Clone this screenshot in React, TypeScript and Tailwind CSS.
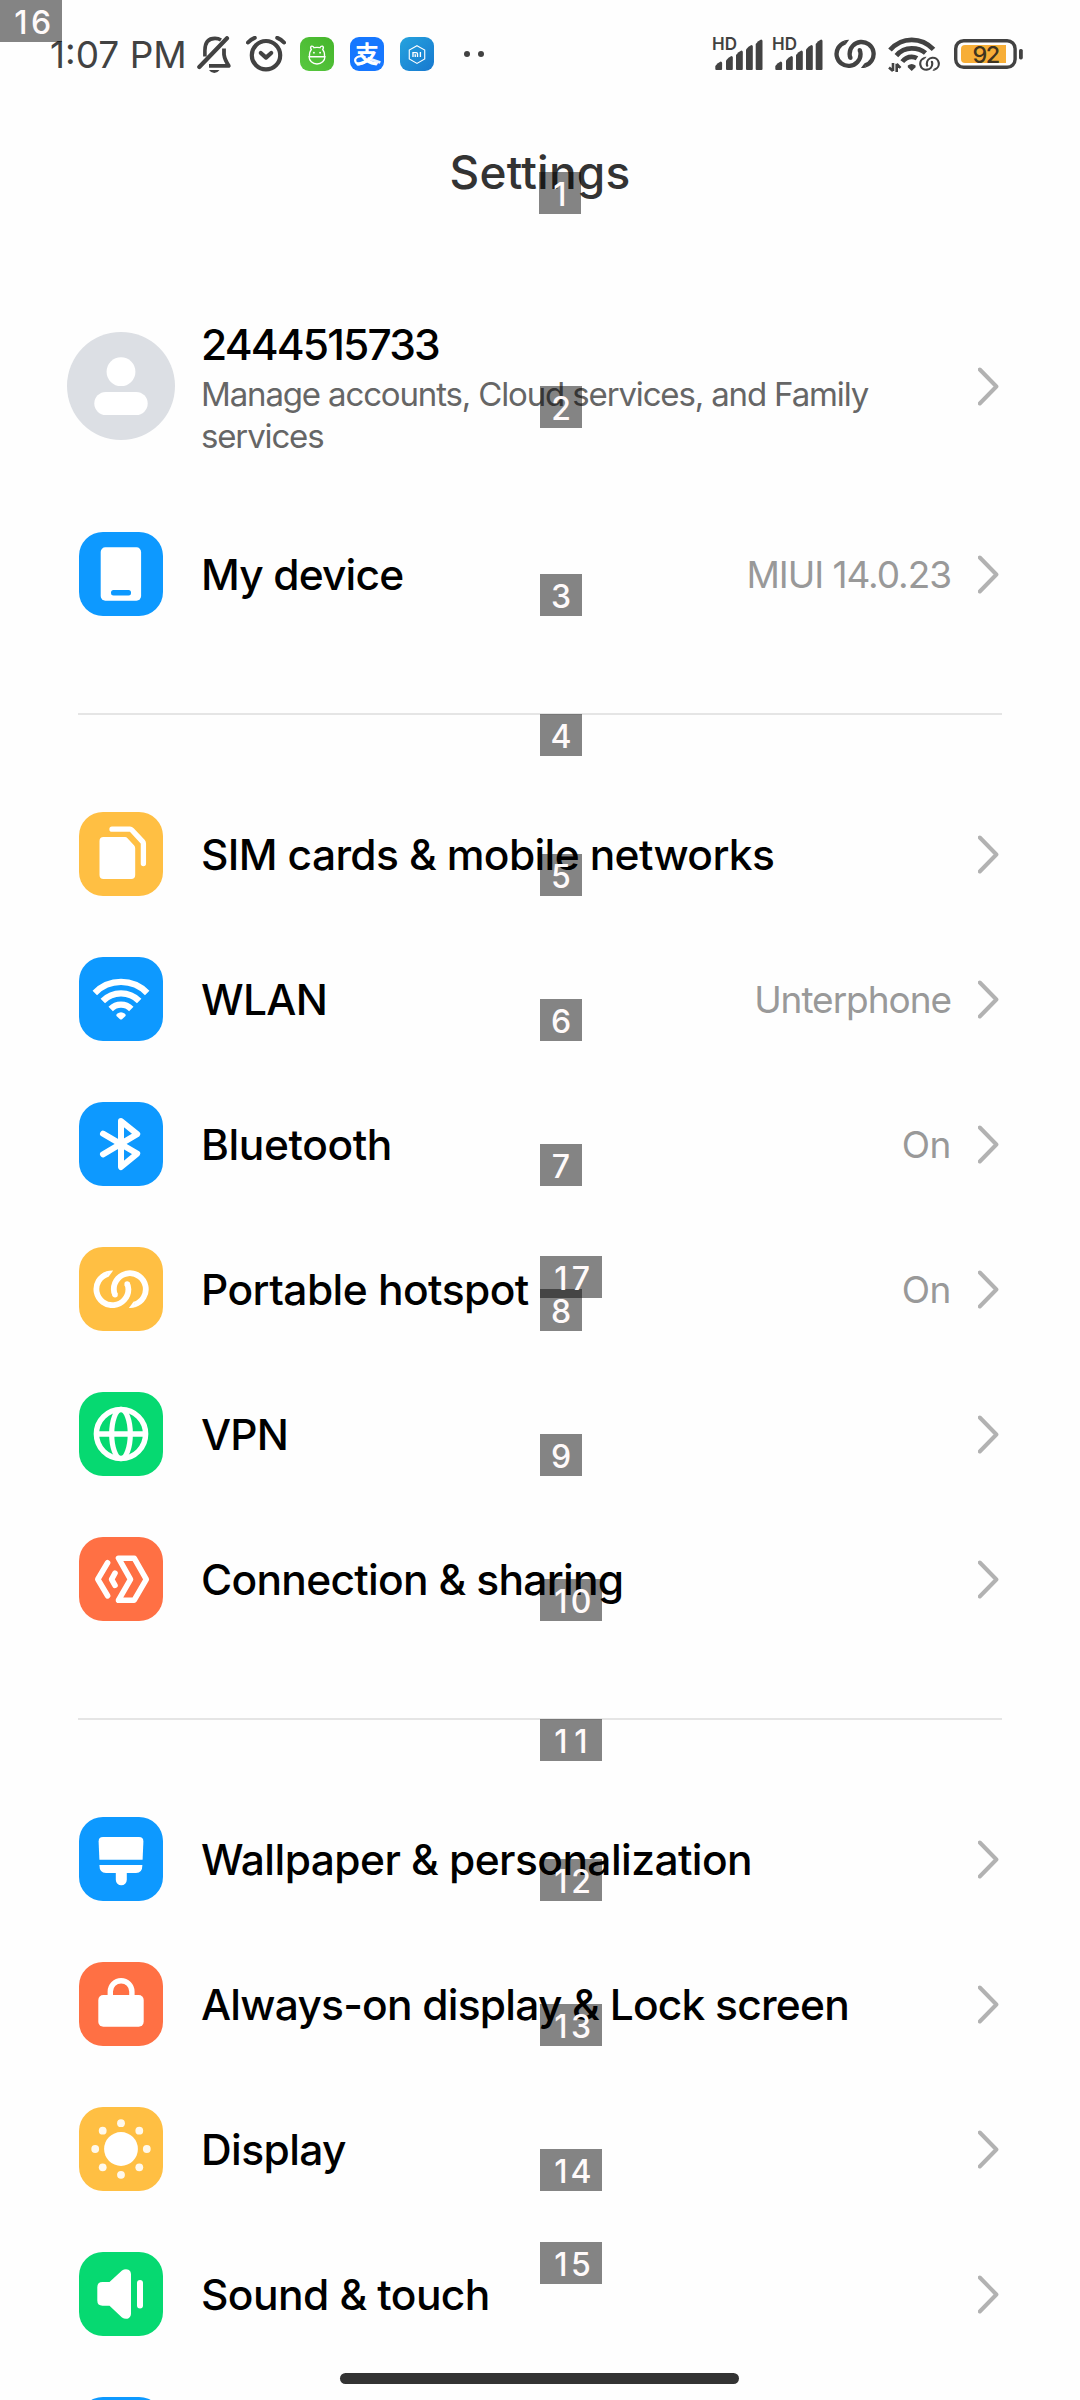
import type { ReactNode } from "react";

const INK = "#424242";

function LinkRings({ color, className }: { color: string; className: string }) {
  return (
    <svg viewBox="14 22.5 56 38.5" className={className} fill="none" stroke={color} strokeWidth="5.8">
      <path d="M28.6 26.4 A16 16 0 1 0 49.4 41.7 Q49.4 38.5 48 36.2" />
      <path d="M55.5 57 A16 16 0 1 0 34.8 41.7 Q34.8 45 36.2 47.4" />
      <g fill={color} stroke="none">
        <path d="M27.4 23.8 Q30.5 22.8 34.2 22.9 L29.4 29.4Z" />
        <path d="M56.7 59.6 Q53.6 60.6 49.9 60.5 L54.7 54Z" />
        <circle cx="48.1" cy="36.4" r="2.7" />
        <circle cx="36.1" cy="47.2" r="2.7" />
      </g>
    </svg>
  );
}

function Signal() {
  const bars = [
    [2.3, 25.5],
    [13, 20],
    [23, 14.5],
    [33, 9],
    [42.7, 3.5],
  ];
  return (
    <div className="relative h-[36px] w-[50px] shrink-0">
      <svg viewBox="0 0 50 36" className="h-[36px] w-[50px]" fill={INK}>
        {bars.map(([x, y]) => (
          <path
            key={x}
            d={`M${x} 33 V${y + 4.5} Q${x + 2.4} ${y + 1} ${x + 5.4} ${y} Q${x + 6.8} ${y} ${x + 6.8} ${y + 1.5} V33 Q${x + 6.8} 34 ${x + 5.8} 34 H${x + 1} Q${x} 34 ${x} 33Z`}
          />
        ))}
      </svg>
      <span className="absolute -left-[1px] top-0 text-[17px] font-semibold leading-[17px] text-[#424242]">HD</span>
    </div>
  );
}

function StatusBar() {
  return (
    <div className="flex h-[108px] items-start pl-[50px] pt-[36px] text-[#424242]">
      <span className="mt-px w-[147px] shrink-0 whitespace-nowrap text-[37px] leading-[36px]">1:07 PM</span>
      <svg viewBox="0 0 36 37" className="h-[37px] w-[36px] shrink-0" fill="none" stroke={INK} strokeWidth="4.2">
        <path d="M2.3 31 L30 2.2" strokeLinecap="round" />
        <path d="M7.9 20.5 V14.5 C7.9 6 12 2.4 18 2.4 Q21.5 2.4 24 4" strokeWidth="3.6" />
        <path d="M27 12.5 V18.5 Q27.6 23.5 31.8 29.8 H12" strokeWidth="3.8" strokeLinejoin="round" />
        <path d="M12 34 H22.5 Q20.5 37 17.3 37 Q14 37 12 34Z" fill={INK} stroke="none" />
      </svg>
      <svg viewBox="-1 0 40 37" className="ml-[13px] h-[37px] w-[40px] shrink-0" fill="none" stroke={INK} strokeWidth="4.2" strokeLinecap="round">
        <circle cx="19" cy="19.2" r="14.2" />
        <path d="M13.8 17 L19 21.6 L24.2 17" strokeLinejoin="round" />
        <path d="M1 6.5 Q3.8 3.2 7.8 1.8 M37 6.5 Q34.2 3.2 30.2 1.8" strokeWidth="4" />
      </svg>
      <div className="ml-[14px] mt-px size-[34px] shrink-0 rounded-[9px] bg-gradient-to-tr from-[#58c840] to-[#45b52b]">
        <svg viewBox="0 0 33 33" className="size-[34px]" fill="none" stroke="#fff" strokeWidth="1.3">
          <path d="M8.8 19.2 H24.2 C24.2 23 21 26.2 16.5 26.2 C12 26.2 8.8 23 8.8 19.2Z" />
          <path d="M9.2 19 C9 15.5 9.8 13.5 11 12.2 Q9.6 10.2 11 9 Q12.8 8.6 13.6 10.4 Q16.5 9.6 19.4 10.4 Q20.2 8.6 22 9 Q23.4 10.2 22 12.2 C23.2 13.5 24 15.5 23.8 19" />
          <circle cx="13.5" cy="15.2" r="0.9" fill="#fff" stroke="none" />
          <circle cx="19.5" cy="15.2" r="0.9" fill="#fff" stroke="none" />
        </svg>
      </div>
      <div className="relative ml-[16px] mt-px size-[34px] shrink-0 overflow-hidden rounded-[9px] bg-[#1677ff] text-center font-['Noto_Sans_CJK_SC',sans-serif] text-[24px] font-bold leading-[32px] text-white">
        支
        <svg viewBox="0 0 33 33" className="absolute inset-0 size-[34px]" fill="none" stroke="#fff" strokeWidth="2">
          <path d="M15 19.5 C8 17 3.8 20.5 5.3 24 C7 27.5 13 27 17 22.5" />
          <path d="M17 20.5 L29.5 24.8" strokeWidth="2.6" opacity="0.9" />
        </svg>
      </div>
      <div className="ml-[16px] mt-px size-[34px] shrink-0 rounded-[9px] bg-gradient-to-br from-[#26a3de] to-[#1878cf]">
        <svg viewBox="0 0 33 33" className="size-[34px]" fill="none" stroke="#fff" strokeWidth="1.1">
          <path d="M16.5 8.5 L24 12.6 V21.3 L16.5 25.6 L9 21.3 V12.6Z" />
          <path d="M12.6 19.3 V15.1 H15.8 Q17 15.1 17 16.2 V19.3 M14.8 16.8 V19.3 M19.8 14.5 V19.3" strokeWidth="1.3" />
        </svg>
      </div>
      <div className="ml-[30px] mt-[15px] flex gap-[8px]">
        <span className="size-[6px] rounded-full bg-[#424242]" />
        <span className="size-[6px] rounded-full bg-[#424242]" />
      </div>
      <div className="ml-[229px] flex items-start">
        <Signal />
        <div className="w-[10px]" />
        <Signal />
        <LinkRings color={INK} className="ml-[11px] mt-[3px] h-[30px] w-[42px]" />
        <div className="relative ml-[12px] h-[37px] w-[52px]">
          <svg viewBox="0 0 52 37" className="h-[37px] w-[52px]" fill="none" stroke={INK} strokeWidth="4.8">
            <path d="M2 14 Q11 3.8 23.7 3.8 Q36.5 3.8 45.5 13.4" />
            <path d="M8.4 19.6 Q14.5 12.4 23.7 12.4 Q32 12.4 37.5 17" />
            <path d="M14.3 25.6 Q18 20.8 23.7 20.8 Q26.5 20.8 29 22.3" />
            <path d="M19.8 29.6 Q23.7 26.4 27.6 29.6 V31.2 L23.7 35 L19.8 31.2Z" fill={INK} stroke="none" />
            <path d="M5 27 V35 M1 31.5 L5 35 M8.7 36 V27.8 M8.7 28 L12.5 31.8" strokeWidth="2.6" />
          </svg>
          <LinkRings color={INK} className="absolute left-[30.5px] top-[20px] h-[15.5px] w-[21px]" />
        </div>
        <div className="relative ml-[14px] mt-[3px] h-[30px] w-[70px]">
          <svg viewBox="0 0 70 30" className="h-[30px] w-[70px]">
            <rect x="1.7" y="1.7" width="59.4" height="26.6" rx="8" fill="none" stroke={INK} strokeWidth="3.4" />
            <path d="M11 6 H52 V24 H11 Q7 24 7 20 V10 Q7 6 11 6Z" fill="#f7ae37" />
            <rect x="65" y="10" width="3.8" height="10.4" rx="1.6" fill={INK} />
          </svg>
          <span className="absolute left-0 top-0 w-[63px] text-center text-[23.5px] font-medium leading-[31px] tracking-[-1.6px] text-[#3f3420]">92</span>
        </div>
      </div>
    </div>
  );
}

function Chevron() {
  return (
    <svg viewBox="0 0 22 40" className="h-[40px] w-[22px] shrink-0" fill="none" stroke="#b2b2b2" strokeWidth="4" strokeLinecap="round">
      <path d="M1.8 3.5 L18.4 20.5 L1.8 37.5" strokeLinejoin="round" />
    </svg>
  );
}

function Glyph({ children }: { children: ReactNode }) {
  return (
    <svg viewBox="0 0 84 84" className="size-[84px]" fill="none" stroke="none">
      {children}
    </svg>
  );
}

const glyphs: Record<string, ReactNode> = {
  device: (
    <Glyph>
      <rect x="21.7" y="15.3" width="40.4" height="53.4" rx="4.6" fill="#fff" />
      <rect x="32" y="58" width="20" height="5.4" rx="2.5" fill="#0d99ff" />
    </Glyph>
  ),
  sim: (
    <Glyph>
      <path d="M24.5 25 H46 Q47.5 25 48.5 26.2 L55.2 33.6 Q56.2 34.8 56.2 36.4 V63 Q56.2 67 52.2 67 H24.5 Q20.5 67 20.5 63 V29 Q20.5 25 24.5 25Z" fill="#fff" />
      <path d="M33 17.2 H51 Q52 17.2 52.8 18 L63.6 29.6 Q64.4 30.5 64.4 31.6 V51.5" stroke="#fff" strokeWidth="5.3" strokeLinecap="round" />
    </Glyph>
  ),
  wifi: (
    <Glyph>
      <g stroke="#fff" strokeWidth="6.2">
        <path d="M15.8 36 A36.5 36.5 0 0 1 68.2 36" />
        <path d="M23.8 44 A25.5 25.5 0 0 1 60.2 44" />
        <path d="M31.7 52 A14.5 14.5 0 0 1 52.3 52" />
      </g>
      <path d="M38 56.8 Q42 53.6 46 56.8 Q47.4 58.2 46 59.4 L43 62.2 Q42 63 41 62.2 L38 59.4 Q36.6 58.2 38 56.8Z" fill="#fff" />
    </Glyph>
  ),
  bluetooth: (
    <Glyph>
      <path d="M24 31.7 L58.2 51.6 L42 65 V19 L58.2 32.2 L24 52.3" stroke="#fff" strokeWidth="6" strokeLinecap="round" strokeLinejoin="round" />
    </Glyph>
  ),
  hotspot: <LinkRings color="#fff" className="ml-[14px] mt-[22.5px] h-[38.5px] w-[56px]" />,
  vpn: (
    <Glyph>
      <g stroke="#fff" strokeWidth="5.5">
        <circle cx="42" cy="42" r="24.6" />
        <ellipse cx="42" cy="42" rx="9.3" ry="24.6" strokeWidth="5.2" />
        <path d="M18 42 H66" />
      </g>
    </Glyph>
  ),
  sharing: (
    <Glyph>
      <g stroke="#fff" strokeWidth="5.6" strokeLinecap="round" strokeLinejoin="round">
        <path d="M28.6 25.8 L18.8 42.3 L28.6 58.8" />
        <path d="M36 36.2 L32.6 42.3 L36 48.4" />
        <path d="M39.5 21.2 H55.2 L67.3 42.3 L55.2 63.2 H39.5 L51.5 42.3Z" />
      </g>
    </Glyph>
  ),
  wallpaper: (
    <Glyph>
      <path d="M24 20 H60 Q64.4 20 64.4 24.4 L63.6 42.8 H20.4 L19.6 24.4 Q19.6 20 24 20Z" fill="#fff" />
      <path d="M20.4 48 H63.4 Q63.4 56 57 56 H47.8 V62.8 A5.5 5.5 0 0 1 36.8 62.8 V56 H27 Q20.4 56 20.4 48Z" fill="#fff" />
    </Glyph>
  ),
  lock: (
    <Glyph>
      <rect x="19.3" y="33" width="45.4" height="31.8" rx="5" fill="#fff" />
      <path d="M31.3 35 V29.5 A10.8 10.8 0 0 1 52.9 29.5 V35" stroke="#fff" strokeWidth="5.4" />
    </Glyph>
  ),
  display: (
    <Glyph>
      <circle cx="42" cy="42" r="16.9" fill="#fff" />
      <g fill="#fff" fillOpacity="0.9">
        <circle cx="42" cy="16.2" r="3.9" />
        <circle cx="42" cy="67.8" r="3.9" />
        <circle cx="16.2" cy="42" r="3.9" />
        <circle cx="67.8" cy="42" r="3.9" />
        <circle cx="23.7" cy="23.7" r="3.9" />
        <circle cx="60.3" cy="23.7" r="3.9" />
        <circle cx="23.7" cy="60.3" r="3.9" />
        <circle cx="60.3" cy="60.3" r="3.9" />
      </g>
    </Glyph>
  ),
  sound: (
    <Glyph>
      <path d="M23.5 30 H30.5 L43 18.6 Q46.5 16 50 18 Q52 19.5 52 22 V62 Q52 64.5 50 66 Q46.5 68 43 65.4 L30.5 53.8 H23.5 Q18.3 53.8 18.3 48.6 V35.2 Q18.3 30 23.5 30Z" fill="#fff" />
      <rect x="58" y="28" width="6" height="28.4" rx="3" fill="#fff" />
    </Glyph>
  ),
  none: null,
};

type Item = { icon: string; tile: string; label: string; track: string; value?: string; valueTrack?: string };

const BLUE = "bg-[#0d99ff]";
const YELLOW = "bg-[#ffbf43]";
const GREEN = "bg-[#06d971]";
const ORANGE = "bg-[#ff7044]";

const groups: Item[][] = [
  [{ icon: "device", tile: BLUE, label: "My device", track: "tracking-[-0.85px]", value: "MIUI 14.0.23", valueTrack: "tracking-[-1.05px]" }],
  [
    { icon: "sim", tile: YELLOW, label: "SIM cards & mobile networks", track: "tracking-[-0.64px]" },
    { icon: "wifi", tile: BLUE, label: "WLAN", track: "tracking-[-0.7px]", value: "Unterphone", valueTrack: "tracking-[-1.05px]" },
    { icon: "bluetooth", tile: BLUE, label: "Bluetooth", track: "tracking-[-0.4px]", value: "On", valueTrack: "tracking-[-0.4px]" },
    { icon: "hotspot", tile: YELLOW, label: "Portable hotspot", track: "tracking-[-0.55px]", value: "On", valueTrack: "tracking-[-0.4px]" },
    { icon: "vpn", tile: GREEN, label: "VPN", track: "tracking-[-0.8px]" },
    { icon: "sharing", tile: ORANGE, label: "Connection & sharing", track: "tracking-[-0.7px]" },
  ],
  [
    { icon: "wallpaper", tile: BLUE, label: "Wallpaper & personalization", track: "tracking-[-0.57px]" },
    { icon: "lock", tile: ORANGE, label: "Always-on display & Lock screen", track: "tracking-[-0.78px]" },
    { icon: "display", tile: YELLOW, label: "Display", track: "tracking-[-0.6px]" },
    { icon: "sound", tile: GREEN, label: "Sound & touch", track: "tracking-[-0.58px]" },
    { icon: "none", tile: BLUE, label: "", track: "" },
  ],
];

function Row({ item }: { item: Item }) {
  return (
    <div className="flex h-[145px] items-center pl-[79px] pr-[80px] pt-px">
      <div className={`size-[84px] shrink-0 overflow-hidden rounded-[24px] ${item.tile}`}>{glyphs[item.icon]}</div>
      <span className={`ml-[38px] grow whitespace-nowrap pt-[2px] text-[42.5px] font-[450] leading-[50px] text-black ${item.track}`}>{item.label}</span>
      {item.value && <span className={`mr-[27px] whitespace-nowrap pt-[2px] text-[37px] leading-[44px] text-[#999999] ${item.valueTrack}`}>{item.value}</span>}
      {item.label && <Chevron />}
    </div>
  );
}

function Divider() {
  return <div className="mx-[78px] mb-[66px] mt-[67px] h-[2px] bg-[#e5e5e5]" />;
}

// Numbered markers that float over the list: [number, left, top]
const markers: [number, number, number][] = [
  [1, 539, 172],
  [2, 540, 386],
  [3, 540, 574],
  [4, 540, 714],
  [5, 540, 854],
  [6, 540, 999],
  [7, 540, 1144],
  [8, 540, 1289],
  [9, 540, 1434],
  [10, 540, 1579],
  [11, 540, 1719],
  [12, 540, 1859],
  [13, 540, 2004],
  [14, 540, 2149],
  [15, 540, 2242],
  [16, 0, 0],
  [17, 540, 1256],
];

function Marker({ n, left, top }: { n: number; left: number; top: number }) {
  return (
    <div className="absolute flex h-[42px] items-center bg-black/48 px-[11px] text-[32px] font-medium leading-[42px] text-[#fffafa]" style={{ left, top }}>
      {String(n).split("").map((d, i) => (
        <span key={i} className="flex w-[20px] justify-center pt-[3px]">{d}</span>
      ))}
    </div>
  );
}

export default function App() {
  return (
    <div className="relative h-[2400px] w-[1080px] overflow-hidden bg-[#fefefe] font-['Inter',sans-serif]">
      <StatusBar />
      <h1 className="flex h-[128px] items-center justify-center text-[46px] font-[450] tracking-[0.2px] text-[#333333]">Settings</h1>
      <div className="flex h-[265px] items-center pl-[67px] pr-[80px] pt-[35px]">
        <svg viewBox="0 0 108 108" className="size-[108px] shrink-0">
          <circle cx="54" cy="54" r="54" fill="#dcdfe4" />
          <circle cx="54" cy="39.7" r="14.4" fill="#fff" />
          <rect x="27.3" y="60" width="53.4" height="23" rx="11.5" fill="#fff" />
        </svg>
        <div className="ml-[26px] grow">
          <div className="text-[42.5px] font-[450] leading-[57px] tracking-[-1.85px] text-black">2444515733</div>
          <p className="w-[700px] text-[33px] leading-[42px] tracking-[-1.15px] text-[#666666]">Manage accounts, Cloud services, and Family services</p>
        </div>
        <Chevron />
      </div>
      {groups.map((items, g) => (
        <div key={g}>
          {g > 0 && <Divider />}
          {items.map((item, i) => (
            <Row key={i} item={item} />
          ))}
        </div>
      ))}
      <div className="absolute left-[340px] top-[2373px] h-[11px] w-[399px] rounded-full bg-[#333333]" />
      {markers.map(([n, left, top]) => (
        <Marker key={n} n={n} left={left} top={top} />
      ))}
    </div>
  );
}
